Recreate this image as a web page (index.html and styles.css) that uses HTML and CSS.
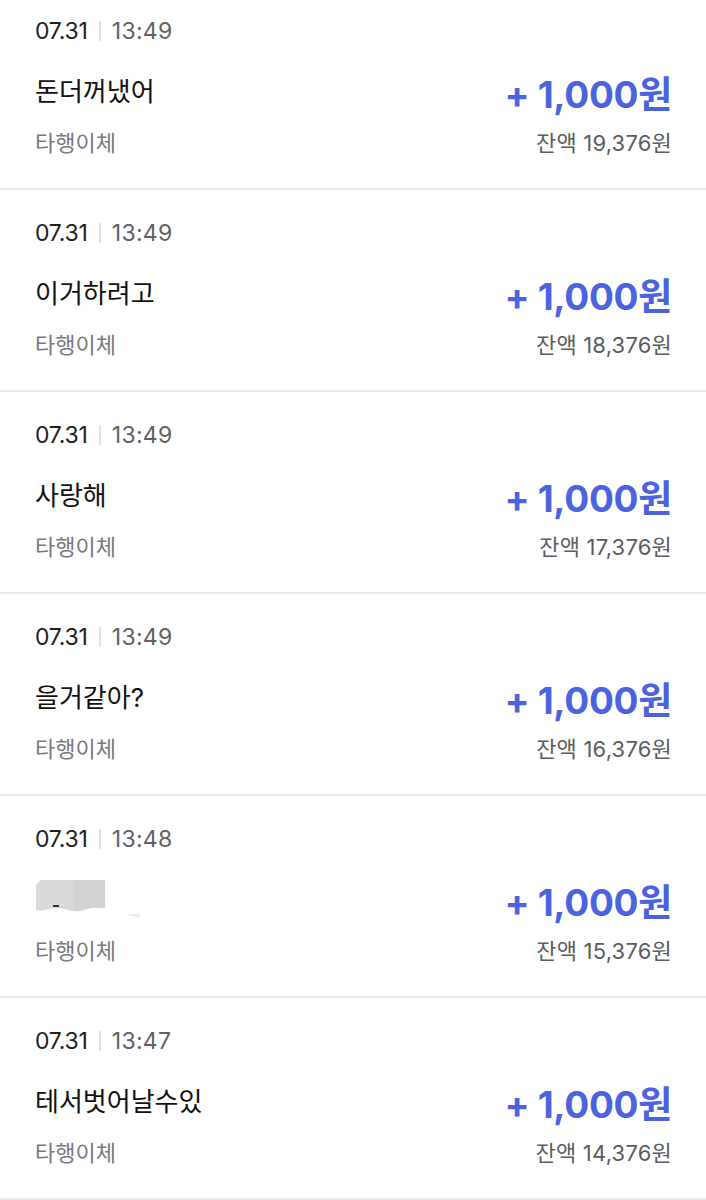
FILE: index.html
```html
<!DOCTYPE html>
<html lang="ko">
<head>
    <meta charset="UTF-8">
    <meta name="viewport" content="width=device-width, initial-scale=1.0">
    <title>거래내역</title>
    <link rel="stylesheet" href="styles.css">
</head>
<body>
    <ul class="history">
        <li class="item">
            <div class="when"><span class="date">07.31</span><span class="bar"></span><span class="time">13:49</span></div>
            <div class="line">
                <span class="title">돈더꺼냈어</span>
                <span class="amount">+ 1,000원</span>
            </div>
            <div class="line sub">
                <span class="kind">타행이체</span>
                <span class="balance">잔액 19,376원</span>
            </div>
        </li>
        <li class="item">
            <div class="when"><span class="date">07.31</span><span class="bar"></span><span class="time">13:49</span></div>
            <div class="line">
                <span class="title">이거하려고</span>
                <span class="amount">+ 1,000원</span>
            </div>
            <div class="line sub">
                <span class="kind">타행이체</span>
                <span class="balance">잔액 18,376원</span>
            </div>
        </li>
        <li class="item">
            <div class="when"><span class="date">07.31</span><span class="bar"></span><span class="time">13:49</span></div>
            <div class="line">
                <span class="title">사랑해</span>
                <span class="amount">+ 1,000원</span>
            </div>
            <div class="line sub">
                <span class="kind">타행이체</span>
                <span class="balance">잔액 17,376원</span>
            </div>
        </li>
        <li class="item">
            <div class="when"><span class="date">07.31</span><span class="bar"></span><span class="time">13:49</span></div>
            <div class="line">
                <span class="title">을거같아?</span>
                <span class="amount">+ 1,000원</span>
            </div>
            <div class="line sub">
                <span class="kind">타행이체</span>
                <span class="balance">잔액 16,376원</span>
            </div>
        </li>
        <li class="item">
            <div class="when"><span class="date">07.31</span><span class="bar"></span><span class="time">13:48</span></div>
            <div class="line">
                <!-- name blurred out in the screenshot -->
                <svg class="blur" width="110" height="40" viewBox="0 0 110 40">
                    <path d="M1 5 L6 0 L70 0 L70 28 Q60 26 50 30 Q40 33 30 29 Q20 27 10 30 Q4 31 1 30 Z" fill="#d9d9db"/>
                    <path d="M38 0 L70 0 L70 28 Q55 27 38 30 Z" fill="#d3d3d5"/>
                    <rect x="18" y="25" width="6" height="2" fill="#333"/>
                    <path d="M92 35 L104 33 L105 38 Z" fill="#ececee"/>
                </svg>
                <span class="amount">+ 1,000원</span>
            </div>
            <div class="line sub">
                <span class="kind">타행이체</span>
                <span class="balance">잔액 15,376원</span>
            </div>
        </li>
        <li class="item">
            <div class="when"><span class="date">07.31</span><span class="bar"></span><span class="time">13:47</span></div>
            <div class="line">
                <span class="title">테서벗어날수있</span>
                <span class="amount">+ 1,000원</span>
            </div>
            <div class="line sub">
                <span class="kind">타행이체</span>
                <span class="balance">잔액 14,376원</span>
            </div>
        </li>
    </ul>
</body>
</html>
```

FILE: styles.css
```css
body {
    margin: 0;
    background: #fff;
    font-family: Inter, "Noto Sans CJK KR", sans-serif;
    color: #111;
}
.history {
    list-style: none;
    margin: -12px 0 0 0;
    padding: 0;
}
.item {
    height: 202px;
    box-sizing: border-box;
    padding: 30px 34px 0 35px;
    border-bottom: 2px solid #e9e9eb;
}
.when {
    display: flex;
    align-items: center;
    height: 26px;
    font-size: 23px;
}
.date {
    color: #1e1e1e;
    letter-spacing: -0.2px;
}
.bar {
    width: 2px;
    height: 20px;
    background: #e2e2e4;
    margin: 0 11px 0 11px;
}
.time {
    color: #5f6166;
    letter-spacing: 0.3px;
}
.line {
    display: flex;
    justify-content: space-between;
    align-items: center;
}
.line:nth-child(2) {
    margin-top: 24px;
    height: 48px;
}
.title {
    font-size: 26px;
    color: #111;
    margin-top: -6px;
}
.amount {
    font-size: 37px;
    font-weight: bold;
    color: #4b63de;
    letter-spacing: -0.3px;
}
.sub {
    margin-top: 9px;
    font-size: 22px;
}
.kind {
    color: #77797e;
}
.balance {
    color: #5a5c61;
    letter-spacing: 0.2px;
}
.blur {
    display: block;
    margin-top: 0;
}
```
